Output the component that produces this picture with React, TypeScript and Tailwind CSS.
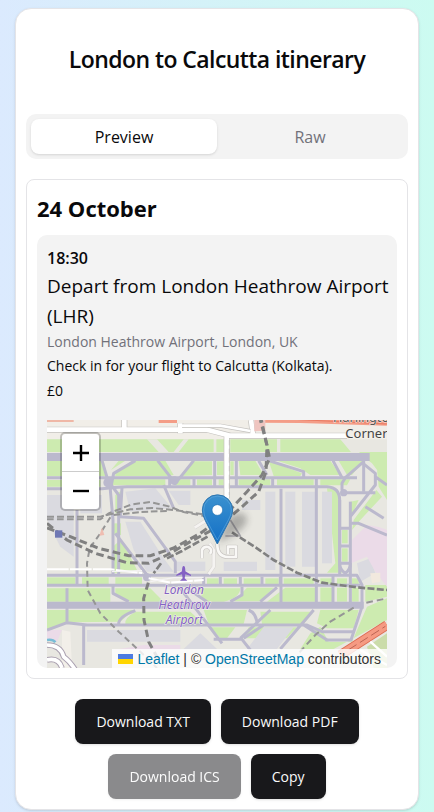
import { useState } from "react";

const greens = [
  "M0 58H500V96H0Z", "M508 58H532V96H508Z", "M550 58H690V96H550Z", "M700 58H880L930 96H700Z", "M930 96H1020V190L975 130Z",
  "M0 122H170L180 168H0Z", "M205 168Q200 160 240 135L255 122H355L380 165L360 168Z", "M215 122H235L192 150Z", "M400 168L440 124H495V165Z",
  "M510 124H530V165H510Z", "M550 124H560V165H550Z", "M575 122H625L650 165H580Z", "M665 122L765 160L760 168H680Z", "M690 122H850L880 165H790L760 145Z", "M875 122H950L915 165H900Z",
  "M0 180H160V200H0Z", "M195 178H355V196H195Z", "M380 178H430V196H380Z", "M450 178H495V196H450Z", "M515 178H530V196H515Z", "M575 178H670V196H575Z", "M690 178H800V196H690Z", "M820 178H910L900 196H820Z",
  "M920 300L988 210L1005 230L940 300L915 330Z", "M990 150L1020 175V240L995 200Z", "M840 205Q875 205 878 240V310Q870 430 885 458H840L865 430Z",
  "M910 245L935 240L908 300Z", "M885 330H902V370H885Z", "M885 385H902V425H885Z", "M205 225L222 212V280H205Z", "M200 310H222V345H200Z", "M200 378L220 360L250 410L270 450L200 460Z",
  "M0 472H85V492H0Z", "M105 472H185V492H105Z", "M205 472H285V492H205Z", "M480 475H515V492H480Z", "M530 475H570V492H530Z", "M590 475H640V492H590Z", "M655 475H695V492H655Z", "M710 475H800V492H710Z", "M820 475H855V492H820Z", "M870 475H900V492H870Z", "M915 475H935V492H915Z",
  "M0 505H190V545H0Z", "M205 505H310L350 545H250L205 525Z", "M455 505H580Q578 535 530 545H470Z", "M600 503H680L640 544H560Z", "M715 503H805V545H660Z", "M820 503H855V545H820Z", "M870 503H900V545H870Z", "M915 503H935V545H915Z",
  "M0 570H260L220 605L60 607L0 635Z", "M265 575H430L470 612H235Q230 595 265 575Z", "M470 570H600L590 612H485Z", "M640 575H800L770 612H645Z", "M820 570H935L920 625H840L810 610Z", "M490 622H565L540 655H520Z", "M605 622H750L720 655H590Z", "M790 640L820 620L845 665H915L960 560L1020 535V600L860 687H760Z",
  "M955 495H1020V530L955 545Z",
];
const aprons = [
  "M0 225H80V410L40 380L0 300Z", "M100 225H165V280H100Z", "M235 215L325 205L375 265L250 275Z", "M235 305H280L350 415L380 455H300L260 390Z",
  "M365 212H430V255H395Z", "M655 215H685V450H655Z", "M715 215H745V440H715Z", "M765 215H805V440H765Z", "M825 215H855V430H825Z", "M390 425H475V453H390Z", "M530 425H630V453H530Z", "M585 240H640V270H585Z",
  "M120 630H400V665H120Z", "M650 622H740L690 687H600Z", "M460 640L510 687H410Z", "M930 430L970 415L985 460L940 485Z",
];
const taxiways = [
  "M0 173H930", "M0 206H165Q200 201 240 200H840Q878 202 878 240V465", "M165 122L183 182L215 225V465", "M198 465V300L190 210L200 160L265 122",
  "M332 122L385 190L440 122M350 195L380 265", "M368 173V200M441 173V200M503 122V200M568 122V200M677 173V200", "M635 122L660 165M665 122L770 155V173", "M858 122L885 173M950 120V215", "M950 125L895 173L885 190V210",
  "M910 245V560", "M948 130L985 160V195L910 290M885 218H985M985 170L1020 195", "M702 206V560M808 175V560M858 465V550", "M225 202L220 290L290 295L385 425V460M205 340L300 465", "M90 270V495M198 495V520L245 545M60 505V605",
  "M878 240V430Q878 450 895 460Q910 450 910 430M880 325H910M880 378H910M880 430H910",
  "M0 466H930L945 495V560L912 660H835", "M0 496H940", "M470 470V495M520 470V495M580 470V495M645 470V495M700 470V495", "M400 505L480 610L525 670M420 505L480 545M585 500V525L550 545M690 502L640 545M670 570L580 655M605 570Q630 580 630 615",
  "M0 630L60 608L120 615H780L825 635H920M215 612Q215 590 265 572M110 615V735M800 570L700 687M500 658H585L610 690M770 615L840 660M590 655L650 615", "M910 310L935 310L1020 345M955 260L1010 295",
];

function HeathrowMap() {
  return (
    <svg viewBox="0 0 1020 744" className="block w-full" role="img" aria-label="Map of London Heathrow Airport">
      <defs>
        <linearGradient id="pin" x2="0" y2="1"><stop stopColor="#3b91cf" /><stop offset="1" stopColor="#126fc6" /></linearGradient>
        <filter id="blur" x="-50%" y="-50%" width="200%" height="200%"><feGaussianBlur stdDeviation="11" /></filter>
      </defs>
      <rect width="1020" height="744" fill="#e8e7e1" />
      <path d="M0 0H1020V58H0Z" fill="#f1eee8" />
      <g fill="#cdebb0">{greens.map((d) => <path key={d} d={d} />)}</g>
      <g fill="#dadae0">{aprons.map((d) => <path key={d} d={d} />)}</g>
      <path d="M915 360L960 315Q1000 320 1020 330V500L985 455L960 410L912 430Z" fill="#ebdbe8" />
      <path d="M0 630H45L30 665L0 660ZM200 690L290 675H400V690Z" fill="#ebdbe8" />
      <path d="M45 630L70 635L75 744H45Z" fill="#f2efe9" />
      <path d="M970 460L1000 458V485L975 490Z" fill="#f2e9de" />
      <path d="M300 58H330L365 96H335ZM410 58H425L395 96H380ZM880 58H895L940 100H915Z" fill="#e8e7e1" />
      <g fill="none" stroke="#bbb9cd" strokeWidth="9" strokeLinejoin="round">{taxiways.map((d) => <path key={d} d={d} />)}</g>
      <g fill="#bbb9cd"><circle cx="183" cy="188" r="14" /><circle cx="382" cy="182" r="13" /><circle cx="300" cy="472" r="12" /><circle cx="890" cy="218" r="11" /></g>
      <path d="M0 111H968" stroke="#bbb9cd" strokeWidth="24" />
      <path d="M0 556H950" stroke="#bbb9cd" strokeWidth="21" />

      <g fill="none" strokeLinejoin="round">
        <path d="M0 29H480L550 47H900M232 0V29M539 47V235M612 0L618 45M400 10V40" stroke="#c4c2bf" strokeWidth="18" />
        <path d="M0 29H480L550 47H900M232 0V29M539 47V235M612 0L618 45M400 10V40" stroke="#fff" strokeWidth="14" />
        <path d="M405 17H520L610 33" stroke="#c4c2bf" strokeWidth="12" />
        <path d="M405 17H520L610 33" stroke="#fff" strokeWidth="8" />
        <path d="M547 60V225" stroke="#c4c2bf" strokeWidth="3" strokeDasharray="16 10" />
        <path d="M0 0H80" stroke="#efb7a6" strokeWidth="12" />
        <path d="M335 0H390M640 -1L760 0L1020 8" stroke="#f49d87" strokeWidth="18" />
        <path d="M740 -2L1020 12" stroke="#e4684f" strokeWidth="2" />
        <path d="M622 0H655V32L622 34Z" fill="#efc5c0" />
        <path d="M880 705L1020 615" stroke="#dc6b51" strokeWidth="29" />
        <path d="M880 705L1020 615" stroke="#f59a83" strokeWidth="24" />
        <path d="M905 689L1015 619" stroke="#bd6554" strokeWidth="3" strokeDasharray="28 12" />
        <path d="M960 680L1020 640V744H980Z" fill="#cbdcaa" />
        <path d="M0 675Q40 675 50 710Q70 725 85 750M0 720Q35 712 45 744" stroke="#aaa0b0" strokeWidth="17" />
        <path d="M0 675Q40 675 50 710Q70 725 85 750M0 720Q35 712 45 744" stroke="#fff" strokeWidth="11" />
        <path d="M0 660Q18 657 25 667" stroke="#79bdd6" strokeWidth="8" />
        <path d="M970 665L1020 710M940 690L1020 735" stroke="#fff" strokeWidth="7" />
        <path d="M0 448L190 448L285 459M305 475L370 488L470 480" stroke="#fff" strokeWidth="6" strokeDasharray="65 4" />
        <path d="M195 455L285 452M310 485L380 473L470 472" stroke="#f4f2f3" strokeWidth="4" />
        <path d="M443 323L480 300M488 370L500 390V440L485 462" stroke="#d8d5d3" strokeWidth="11" />
        <path d="M443 323L480 300M488 370L500 390V440L485 462" stroke="#f5f3f1" strokeWidth="8" />
        <path d="M465 415V390Q470 378 484 381Q498 388 489 402M511 372Q510 410 543 411H567V380H543V402" stroke="#c8c5c2" strokeWidth="12" />
        <path d="M465 415V390Q470 378 484 381Q498 388 489 402M511 372Q510 410 543 411H567V380H543V402" stroke="#f9f8f6" strokeWidth="8" />
        <path d="M550 300L580 348H535" stroke="#aaa9ae" strokeWidth="5" />
      </g>

      <g fill="none" stroke="#959595">
        <path d="M0 290H160L250 268L315 264L380 270L475 284" strokeWidth="6" strokeDasharray="21 9" />
        <path d="M0 298H160L185 280L255 253L310 246L365 259L410 276L475 289" strokeWidth="6" strokeDasharray="20 10" />
        <path d="M200 285L280 276L360 273" strokeWidth="6" strokeDasharray="20 8" />
        <path d="M190 292L160 340L128 385L120 430L122 510L160 580L215 635L280 695L330 744" strokeWidth="6" strokeDasharray="18 12" />
        <path d="M958 548L1020 535M920 563L850 605L805 645L750 705" strokeWidth="6" strokeDasharray="20 12" />
      </g>
      <g fill="none" stroke="#808080">
        <path d="M0 310L60 360L145 400L240 428L305 430L360 405L430 365L510 322L580 265L635 215L657 155L660 75L640 0" strokeWidth="9" strokeDasharray="23 12" />
        <path d="M0 324L70 350L155 385L245 407L310 407L380 384L460 340L540 280L600 215L645 165L668 115L654 50L643 0" strokeWidth="9" strokeDasharray="23 12" />
        <path d="M360 415L405 393L485 348M342 430L320 460" strokeWidth="8" strokeDasharray="22 7" />
        <path d="M304 488L290 535L291 600L305 665L335 720" strokeWidth="9" strokeDasharray="22 14" />
        <path d="M555 337L630 385L680 420L750 458L825 488L930 502L1020 510" strokeWidth="8" strokeDasharray="21 7" />
      </g>
      <rect x="24" y="331" width="22" height="22" fill="#6f78b4" />
      <path d="M165 323L172 345L157 347Z" fill="#efbdb1" />
      <path d="M410 438Q415 438 415 454L432 464V468L415 463L413 475L421 482H399L407 475L405 463L388 468V464L405 454Q405 438 410 438Z" fill="#8461c4" />
      <g fontFamily="Noto Sans, Open Sans, sans-serif" stroke="#f5f2ed" strokeWidth="3" paintOrder="stroke">
        <g fill="#8461c4" fontSize="36" fontStyle="italic" textAnchor="middle">
          <text x="411" y="523">London</text><text x="412" y="568">Heathrow</text><text x="412" y="613">Airport</text>
        </g>
        <text x="858" y="5" fill="#555" fontSize="38">Harlington</text>
        <text x="895" y="54" fill="#444" fontSize="39">Corner</text>
      </g>

      <path d="M511 370L545 290Q590 265 600 295Q600 325 545 352Z" fill="#222" opacity=".3" filter="url(#blur)" />
      <path d="M511 372L475 302Q466 286 466 270A45 45 0 0 1 557 270Q557 286 547 302Z" fill="url(#pin)" stroke="#2f75ae" strokeWidth="3" />
      <path d="M511 360L478 300Q470 285 470 270A41 41 0 0 1 553 270Q553 285 544 300Z" fill="none" stroke="#5ca6dc" strokeWidth="2" />
      <circle cx="511" cy="270" r="16" fill="#fff" stroke="#2874b0" strokeWidth="2" />
    </svg>
  );
}

const actionClass = "h-[45px] rounded-lg bg-[#18181b] px-[21px] text-sm text-[#fafafa] shadow-sm disabled:opacity-50";

export default function App() {
  const [tab, setTab] = useState("preview");
  const tabClass = (name: string) =>
    tab === name ? "rounded-lg bg-white text-[#09090b] shadow-sm" : "rounded-lg text-[#71717a]";

  return (
    <div className="min-h-screen bg-linear-to-r from-[#dbeafe] to-[#ccfbf1] px-[15px] pt-2 font-['Open_Sans','Noto_Sans',sans-serif] text-[#09090b]">
      <main className="rounded-2xl border border-[#e4e4e7] bg-white p-[10px] shadow-sm">
        <h1 className="pt-6 text-center text-[23px] leading-8 font-semibold tracking-tight">London to Calcutta itinerary</h1>
        <div role="tablist" className="mt-[39px] grid h-[45px] grid-cols-2 rounded-[10px] bg-[#f3f3f3] p-[5px] text-base">
          <button type="button" role="tab" aria-selected={tab === "preview"} onClick={() => setTab("preview")} className={tabClass("preview")}>Preview</button>
          <button type="button" role="tab" aria-selected={tab === "raw"} onClick={() => setTab("raw")} className={tabClass("raw")}>Raw</button>
        </div>
        <section className="mt-5 rounded-lg border border-[#e4e4e7] p-[10px]">
          <h2 className="text-[22px] leading-9 font-bold">24 October</h2>
          <article className="mt-[9px] overflow-hidden rounded-[10px] bg-[#f3f3f3] px-[10px] pt-[10px]">
            <p className="text-base leading-[26px] font-semibold">18:30</p>
            <h3 className="-mr-2 text-[19px] leading-[30px]">Depart from London Heathrow Airport (LHR)</h3>
            <p className="text-sm leading-[22px] text-[#71717a]">London Heathrow Airport, London, UK</p>
            <p className="text-sm leading-[25px]">Check in for your flight to Calcutta (Kolkata).</p>
            <p className="text-sm leading-[25px] font-medium">£0</p>
            <div className="relative mt-[17px]">
              <HeathrowMap />
              <div className="absolute top-3 left-[13px] flex w-[41px] flex-col rounded-[5px] border-2 border-black/20 bg-white bg-clip-padding">
                <button type="button" aria-label="Zoom in" className="flex h-[38px] items-center justify-center border-b border-[#ccc]">
                  <svg viewBox="0 0 16 16" className="size-4" aria-hidden="true"><path d="M0 8H16M8 0V16" stroke="#000" strokeWidth="2.4" /></svg>
                </button>
                <button type="button" aria-label="Zoom out" className="flex h-[37px] items-center justify-center">
                  <svg viewBox="0 0 16 16" className="size-4" aria-hidden="true"><path d="M0 8H16" stroke="#000" strokeWidth="2.4" /></svg>
                </button>
              </div>
              <div className="absolute right-0 bottom-0 flex h-[19px] items-center bg-white/80 px-[6px] font-['Liberation_Sans',sans-serif] text-sm whitespace-pre text-[#333]">
                <svg viewBox="0 0 15 10" className="mr-1 h-[10px] w-[15px]" aria-hidden="true"><path d="M0 0H15V5H0Z" fill="#4c7be1" /><path d="M0 5H15V10H0Z" fill="#ffd500" /></svg>
                <a href="https://leafletjs.com" className="text-[#0078a8]">Leaflet</a> | © <a href="https://www.openstreetmap.org/copyright" className="text-[#0078a8]">OpenStreetMap</a> contributors
              </div>
            </div>
          </article>
        </section>
        <div className="mt-5 flex flex-wrap justify-center gap-[10px]">
          <button type="button" className={actionClass}>Download TXT</button>
          <button type="button" className={actionClass}>Download PDF</button>
          <button type="button" disabled className={actionClass}>Download ICS</button>
          <button type="button" className={actionClass}>Copy</button>
        </div>
      </main>
    </div>
  );
}
